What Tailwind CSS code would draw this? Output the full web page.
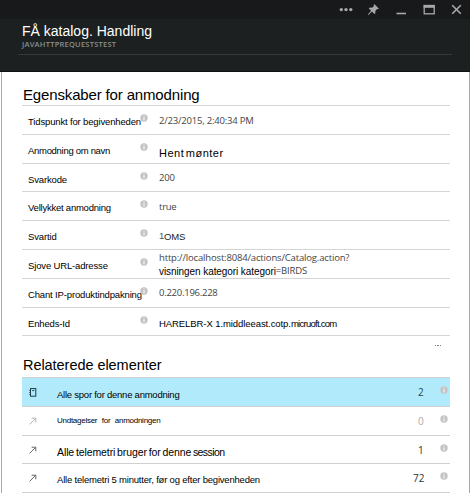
<!DOCTYPE html>
<html lang="da">
<head>
<meta charset="utf-8">
<title>Få katalog</title>
<script src="https://cdn.jsdelivr.net/npm/@tailwindcss/browser@4"></script>
</head>
<body class="bg-white">
<svg class="hidden">
  <symbol id="info" viewBox="0 0 8 8"><circle cx="4" cy="4" r="3.7" fill="#c4c4c4"/><path d="M4 1.500v1M4 3.400v3" stroke="#fff" stroke-width="1"/></symbol>
  <symbol id="arrow" viewBox="0 0 8 8"><path d="M.6 7.4 6.300 1.700M2.700 1.200h4.100v4.100" fill="none" stroke="currentColor" stroke-width=".9"/></symbol>
</svg>
<div class="flex h-[493px] w-[470px] flex-col overflow-hidden bg-white font-['Liberation_Sans',sans-serif] text-black">
  <header class="h-[72px] shrink-0 border-b border-[#111] bg-[#1d2021]">
    <div class="flex h-[19px] items-start justify-end bg-[#18191b] text-[#a6a8a9]">
      <svg class="h-[19px] w-[134px]" viewBox="336 0 134 19" fill="none" stroke="currentColor">
        <g fill="currentColor" stroke="none"><circle cx="341.300" cy="9.600" r="1.700"/><circle cx="346" cy="9.600" r="1.700"/><circle cx="350.800" cy="9.600" r="1.700"/>
        <path d="M374.2 4 379 8.8l-1.3.5-.6-.3-1.8 2 .1 2.2-1 .9-2.4-2.500-3.6 3.3-.6-.5 3.3-3.6-2.300-2.300 1-1 2.300.2 1.900-1.800-.4-.8z"/></g>
        <path d="M396.500 13.500H406" stroke-width="1.600"/>
        <rect x="424.200" y="5.500" width="10" height="8.300" stroke-width="1.300"/><path d="M423.600 6.500h11.200" stroke-width="2.600"/>
        <path d="m452.200 5.200 8.600 8.600M460.800 5.200l-8.600 8.600" stroke-width="1.600"/>
      </svg>
    </div>
    <div class="ml-[18px] mr-[18px] h-[36px] border-b border-[#34383a] pl-1 pt-[4px]">
      <h1 class="whitespace-nowrap text-[14px] leading-[16px] text-white">FÅ katalog. Handling</h1>
      <p class="whitespace-nowrap pt-[1px] font-['Open_Sans',sans-serif] text-[7.500px] font-semibold leading-[9px] tracking-[0.24px] text-[#8b8f90]">JAVAHTTPREQUESTSTEST</p>
    </div>
  </header>
  <main class="ml-[1px] flex-1 border-l border-r border-[#a8a8a8] pl-[20px] pr-[19px]">
    <h2 class="h-[33px] whitespace-nowrap pl-[1px] pt-[14px] text-[15px] leading-[18px] tracking-[-0.15px]">Egenskaber for anmodning</h2>
    <dl class="whitespace-nowrap border-b border-[#d4d4d4] text-[9.500px] leading-[12px] [&>div]:grid [&>div]:h-[28.8px] [&>div]:grid-cols-[112px_19px_1fr] [&>div]:border-t [&>div]:border-[#d4d4d4] [&>div]:pl-[6px] [&_dt]:pt-[10px] [&_dt]:tracking-[-0.15px] [&_svg]:mt-[8px] [&_svg]:size-[8px]">
      <div><dt>Tidspunkt for begivenheden</dt><svg><use href="#info"/></svg><dd class="pt-[9px] font-['Open_Sans',sans-serif] tracking-[-0.2px] text-[#444]">2/23/2015, 2:40:34 PM</dd></div>
      <div><dt><span class="tracking-[-0.3px]">Anmodning om navn</span></dt><svg><use href="#info"/></svg><dd class="pt-[12px] text-[11px] tracking-[0.5px] [word-spacing:-2px]">Hent mønter</dd></div>
      <div><dt>Svarkode</dt><svg><use href="#info"/></svg><dd class="pt-[8px] font-['Open_Sans',sans-serif] tracking-[-0.2px] text-[#444]">200</dd></div>
      <div><dt><span class="tracking-[-0.23px]">Vellykket anmodning</span></dt><svg><use href="#info"/></svg><dd class="pt-[9px] font-['Open_Sans',sans-serif] tracking-[-0.25px] text-[#444]">true</dd></div>
      <div><dt>Svartid</dt><svg><use href="#info"/></svg><dd class="pt-[10px] tracking-[-0.2px] text-[#222]"><span class="relative -top-[1px] text-[#555]">1</span>OMS</dd></div>
      <div><dt>Sjove URL-adresse</dt><svg><use href="#info"/></svg><dd class="pt-[2px] font-['Open_Sans',sans-serif] tracking-[-0.16px] text-[#444]"><p>http://localhost:8084/actions/Catalog.action?</p><p class="flex leading-[14px]"><span class="pt-[1px] font-['Liberation_Sans',sans-serif] text-[10px] tracking-[-0.08px] text-black">visningen kategori kategori</span><span>=BIRDS</span></p></dd></div>
      <div><dt>Chant IP-produktindpakning</dt><svg><use href="#info"/></svg><dd class="pt-[8px] font-['Open_Sans',sans-serif] tracking-[-0.25px] text-[#444]">0.220.196.228</dd></div>
      <div><dt>Enheds-Id</dt><svg><use href="#info"/></svg><dd class="pt-[10px] tracking-[-0.08px]">HARELBR-X 1.middleeast.cotp.<span class="tracking-[-0.73px]">micruoft.com</span></dd></div>
    </dl>
    <div class="flex h-[20px] justify-end gap-[1px] pr-[9px] pt-[9px] [&>i]:h-[1px] [&>i]:w-[1.500px] [&>i]:bg-[#71858e]"><i></i><i></i><i></i></div>
    <h2 class="h-[20.6px] whitespace-nowrap pl-[1px] text-[14.500px] leading-[18px] tracking-[-0.05px]">Relaterede elementer</h2>
    <ul class="whitespace-nowrap border-b border-[#d0d0d0] text-[9.500px] leading-[12px] [&>li]:grid [&>li]:h-[28.8px] [&>li]:grid-cols-[28px_1fr_22px_8px] [&>li]:border-t [&>li]:border-[#d0d0d0] [&>li]:pl-[7px] [&>li]:pr-[2px] [&_b]:pt-[8px] [&_b]:font-['Open_Sans',sans-serif] [&_b]:text-[10px] [&_b]:font-normal">
      <li class="bg-[#b1ebfb]"><svg class="mt-[10px] h-[9px] w-[8px] text-[#1c3c48]" viewBox="0 0 8 9" fill="none" stroke="currentColor"><rect x="1.500" y=".6" width="5.300" height="7.600"/><path d="M.4 2.500h1.500M.4 4.500h1.500M.4 6.500h1.500M3.300 2.600h2"/></svg><span class="pt-[11px] tracking-[-0.24px]">Alle spor for denne anmodning</span><b class="text-[#2c4650]">2</b><svg class="mt-[8px] size-[8px]"><use href="#info"/></svg></li>
      <li><svg class="mt-[10px] size-[8px] text-[#aaa]"><use href="#arrow"/></svg><span class="pt-[8px] text-[8px] tracking-[-0.26px] [word-spacing:2.5px]">Undtagelser for anmodningen</span><b class="text-[#aaa]">0</b><svg class="mt-[8px] size-[8px]"><use href="#info"/></svg></li>
      <li><svg class="mt-[10px] size-[8px] text-[#555]"><use href="#arrow"/></svg><span class="pt-[10px] text-[10.500px] tracking-[-0.1px] [word-spacing:-1px]">Alle telemetri bruger for denne <span class="tracking-[-0.6px]">session</span></span><b class="text-[#333]">1</b><svg class="mt-[8px] size-[8px]"><use href="#info"/></svg></li>
      <li><svg class="mt-[10px] size-[8px] text-[#555]"><use href="#arrow"/></svg><span class="pt-[10px] tracking-[-0.2px]">Alle telemetri 5 minutter, før og efter begivenheden</span><b class="-ml-[5px] text-[#333]">72</b><svg class="mt-[8px] size-[8px]"><use href="#info"/></svg></li>
    </ul>
  </main>
</div>
</body>
</html>
